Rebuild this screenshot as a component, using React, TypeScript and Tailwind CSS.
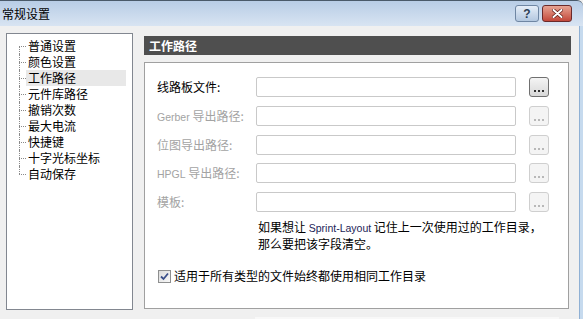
import React from 'react';

const cjk = "font-['Noto_Sans_CJK_SC','Noto_Sans',sans-serif]";
const latin = "font-['Liberation_Sans','DejaVu_Sans',sans-serif]";

const treeItems = ['普通设置', '颜色设置', '工作路径', '元件库路径', '撤销次数', '最大电流', '快捷键', '十字光标坐标', '自动保存'];

type PathRow = { prefix?: string; label: string; enabled: boolean };

const pathRows: PathRow[] = [
  { label: '线路板文件:', enabled: true },
  { prefix: 'Gerber', label: ' 导出路径:', enabled: false },
  { label: '位图导出路径:', enabled: false },
  { prefix: 'HPGL', label: ' 导出路径:', enabled: false },
  { label: '模板:', enabled: false },
];

const BrowseButton: React.FC<{ enabled: boolean }> = ({ enabled }) => (
  <div
    className={`ml-[13px] flex h-[20px] w-[20px] items-end justify-center rounded-[3px] border pb-[4px] ${
      enabled ? 'border-[#707070] bg-gradient-to-b from-[#f4f4f4] to-[#d8d8d8]' : 'border-[#cfcfcf] bg-[#f4f4f4]'
    }`}
  >
    <div className="flex gap-[2px]">
      <span className={`h-[2px] w-[2px] ${enabled ? 'bg-[#303030]' : 'bg-[#b8b8b8]'}`} />
      <span className={`h-[2px] w-[2px] ${enabled ? 'bg-[#303030]' : 'bg-[#b8b8b8]'}`} />
      <span className={`h-[2px] w-[2px] ${enabled ? 'bg-[#303030]' : 'bg-[#b8b8b8]'}`} />
    </div>
  </div>
);

const TitleButtons: React.FC = () => (
  <div className="flex items-center gap-[3px] pr-[11px]">
    <div className="flex h-[17px] w-[24px] items-center justify-center rounded-[3px] border border-[#6f86a3] bg-gradient-to-b from-[#e6eef8] to-[#b3c7df]">
      <span className={`${latin} text-[12px] font-bold leading-none text-[#2d3e55]`}>?</span>
    </div>
    <div className="flex h-[17px] w-[30px] items-center justify-center rounded-[3px] border border-[#6b2a2a] bg-gradient-to-b from-[#e6a393] to-[#c2473a]">
      <svg width="11" height="9" viewBox="0 0 11 9">
        <path d="M1.5 1 L9.5 8 M9.5 1 L1.5 8" stroke="#5a1a14" strokeWidth="3.4" strokeLinecap="round" />
        <path d="M1.5 1 L9.5 8 M9.5 1 L1.5 8" stroke="#ffffff" strokeWidth="2" strokeLinecap="round" />
      </svg>
    </div>
  </div>
);

export default function App() {
  const last = treeItems.length - 1;
  return (
    <div className={`${cjk} flex h-[319px] w-[583px] flex-col overflow-hidden bg-[#f0f0f0] text-[12px] text-black`}>
      {/* title bar */}
      <div className="flex h-[26px] items-center justify-between rounded-tr-[6px] border-t border-[#4a5a6a] bg-gradient-to-b from-[#b8cde6] to-[#d8e4f2]">
        <span className="pl-[2px] text-[12px] text-black">常规设置</span>
        <TitleButtons />
      </div>

      <div className="flex flex-1">
        <div className="flex flex-1 flex-col">
          <div className="flex pl-[6px] pt-[7px]">
            {/* tree */}
            <div className="h-[277px] w-[127px] border border-[#828790] bg-white pt-[4px]">
              {treeItems.map((t, i) => (
                <div key={t} className="flex h-[16px]">
                  <div className="w-[12px]" />
                  <div className="flex w-[7px] flex-col">
                    <div className={`h-[8px] ${i > 0 ? 'border-l border-dotted border-[#8a8a8a]' : ''}`} />
                    <div
                      className={`h-[8px] border-t border-dotted border-[#8a8a8a] ${i < last ? 'border-l' : ''}`}
                    />
                  </div>
                  <div className={`flex w-[100px] items-center pl-[2px] leading-none ${i === 2 ? 'bg-[#e8e8e8]' : ''}`}>
                    {t}
                  </div>
                </div>
              ))}
            </div>

            {/* right panel */}
            <div className="ml-[11px] mt-[3px] flex flex-col">
              <div className="flex h-[19px] w-[427px] items-center bg-[#4f4f4f] pl-[5px] text-[12px] font-bold text-white">
                工作路径
              </div>
              <div className="mt-[7px] h-[247px] w-[425px] border border-[#a0a0a0] bg-white pl-[12px] pt-[14px]">
                <div className="flex flex-col gap-[8.75px]">
                  {pathRows.map((r, i) => (
                    <div key={i} className="flex h-[20px] items-center">
                      <div className={`w-[99px] leading-none ${r.enabled ? 'text-black' : 'text-[#a3a3a3]'}`}>
                        {r.prefix && <span className={`${latin} text-[10.5px]`}>{r.prefix}</span>}
                        {r.label}
                      </div>
                      <div className="h-[20px] w-[260px] rounded-[2px] border border-[#c9c9c9] bg-white" />
                      <BrowseButton enabled={r.enabled} />
                    </div>
                  ))}
                </div>

                <div className="mt-[7px] pl-[101px] leading-[16px]">
                  <div>
                    如果想让 <span className={`${latin} text-[10.5px] text-[#1c2458]`}>Sprint-Layout</span>{' '}
                    记住上一次使用过的工作目录，
                  </div>
                  <div>那么要把该字段清空。</div>
                </div>

                <div className="ml-[1px] mt-[16px] flex h-[16px] items-center gap-[3px]">
                  <div className="flex h-[13px] w-[13px] items-center justify-center border border-[#8e8f8f] bg-gradient-to-br from-[#dcdcdc] to-[#f8f8f8]">
                    <svg width="9" height="9" viewBox="0 0 9 9">
                      <path d="M1 4.5 L3.5 7 L8 1.5" fill="none" stroke="#3a4f8a" strokeWidth="1.8" />
                    </svg>
                  </div>
                  <span className="leading-none">适用于所有类型的文件始终都使用相同工作目录</span>
                </div>
              </div>
            </div>
          </div>
          <div className="flex flex-1 items-end pl-[255px] pr-[20px]">
            <div className="h-[2px] w-full bg-[#f8f8f8]" />
          </div>
        </div>
        {/* window frame right */}
        <div className="w-[4px] border-l border-[#8fb0d4] bg-[#c6daee]" />
      </div>
    </div>
  );
}
